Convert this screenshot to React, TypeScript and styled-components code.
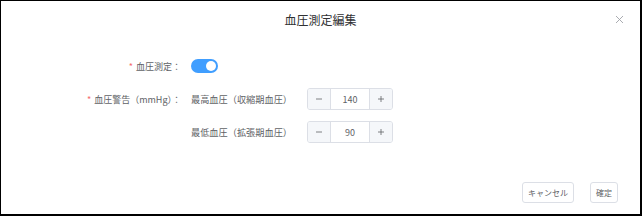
import React from "react";
import styled, { createGlobalStyle } from "styled-components";

const Global = createGlobalStyle`
  html, body { margin: 0; padding: 0; background: #fff; }
  body { font-family: "Noto Sans CJK JP", "Noto Sans", sans-serif; }
  * { box-sizing: border-box; }
`;

const Dialog = styled.div`
  width: 642px;
  height: 216px;
  background: #fff;
  border-style: solid;
  border-color: #000;
  border-width: 1px 2px 2px 1px;
  display: flex;
  flex-direction: column;
`;

const Header = styled.div`
  display: grid;
  grid-template-columns: 1fr auto 1fr;
  align-items: center;
  height: 37px;
  padding: 0 15px 0 15px;
`;

const Title = styled.div`
  grid-column: 2;
  font-size: 12px;
  color: #303133;
  line-height: 1;
  padding-top: 1px;
`;

const Close = styled.button`
  grid-column: 3;
  justify-self: end;
  border: none;
  background: none;
  padding: 0;
  width: 10px;
  height: 10px;
  display: flex;
  align-items: center;
  justify-content: center;
  margin-right: 1px;
`;

const Body = styled.div`
  padding-top: 17px;
  display: flex;
  flex-direction: column;
  gap: 11px;
`;

const FormItem = styled.div`
  display: flex;
  align-items: flex-start;
`;

const Label = styled.div`
  width: 190px;
  padding-right: 10px;
  height: 22px;
  display: flex;
  align-items: center;
  justify-content: flex-end;
  font-size: 9px;
  color: #606266;
  white-space: nowrap;
`;

const Req = styled.span`
  color: #f56c6c;
  margin-right: 3px;
`;

const Content = styled.div`
  display: flex;
  flex-direction: column;
  gap: 11px;
`;

const SubRow = styled.div`
  display: flex;
  align-items: center;
  height: 22px;
`;

const SubLabel = styled.div`
  width: 116px;
  font-size: 9.2px;
  color: #606266;
  white-space: nowrap;
`;

const Switch = styled.div<{ $on: boolean }>`
  width: 27px;
  height: 14px;
  border-radius: 7px;
  background: ${(p) => (p.$on ? "#409eff" : "#dcdfe6")};
  display: flex;
  align-items: center;
  justify-content: ${(p) => (p.$on ? "flex-end" : "flex-start")};
  padding: 0 2px;
  margin-top: 4px;
`;

const Knob = styled.div`
  width: 10px;
  height: 10px;
  border-radius: 50%;
  background: #fff;
`;

const NumberBox = styled.div`
  width: 86px;
  height: 22px;
  border: 1px solid #dcdfe6;
  border-radius: 3px;
  display: grid;
  grid-template-columns: 23px 1fr 23px;
  overflow: hidden;
`;

const Step = styled.div<{ $side: "l" | "r" }>`
  background: #f5f7fa;
  color: #606266;
  display: flex;
  align-items: center;
  justify-content: center;
  ${(p) => (p.$side === "l" ? "border-right: 1px solid #dcdfe6;" : "border-left: 1px solid #dcdfe6;")}
`;

const Value = styled.div`
  display: flex;
  align-items: center;
  justify-content: center;
  font-size: 9px;
  color: #606266;
`;

const Footer = styled.div`
  margin-top: auto;
  display: flex;
  justify-content: flex-end;
  gap: 16px;
  padding: 0 22px 11px 0;
`;

const Button = styled.button`
  height: 21px;
  padding: 0 5px;
  border: 1px solid #dcdfe6;
  border-radius: 3px;
  background: #fff;
  color: #606266;
  font-family: inherit;
  font-size: 8px;
  line-height: 1;
`;

const Minus = () => (
  <svg width="8" height="8" viewBox="0 0 8 8">
    <path d="M1 4h6" stroke="#606266" strokeWidth="0.8" />
  </svg>
);
const Plus = () => (
  <svg width="8" height="8" viewBox="0 0 8 8">
    <path d="M1 4h6M4 1v6" stroke="#606266" strokeWidth="0.8" />
  </svg>
);

const InputNumber = ({ value }: { value: number }) => (
  <NumberBox>
    <Step $side="l"><Minus /></Step>
    <Value>{value}</Value>
    <Step $side="r"><Plus /></Step>
  </NumberBox>
);

export default function App() {
  return (
    <>
      <Global />
      <Dialog>
        <Header>
          <Title>血圧測定編集</Title>
          <Close aria-label="close">
            <svg width="9" height="9" viewBox="0 0 9 9">
              <path d="M1 1l7 7M8 1l-7 7" stroke="#a0a3a8" strokeWidth="0.9" />
            </svg>
          </Close>
        </Header>
        <Body>
          <FormItem>
            <Label><Req>*</Req>血圧測定：</Label>
            <Switch $on><Knob /></Switch>
          </FormItem>
          <FormItem>
            <Label><Req>*</Req>血圧警告（mmHg）：</Label>
            <Content>
              <SubRow>
                <SubLabel>最高血圧（収縮期血圧）</SubLabel>
                <InputNumber value={140} />
              </SubRow>
              <SubRow>
                <SubLabel>最低血圧（拡張期血圧）</SubLabel>
                <InputNumber value={90} />
              </SubRow>
            </Content>
          </FormItem>
        </Body>
        <Footer>
          <Button>キャンセル</Button>
          <Button>確定</Button>
        </Footer>
      </Dialog>
    </>
  );
}
